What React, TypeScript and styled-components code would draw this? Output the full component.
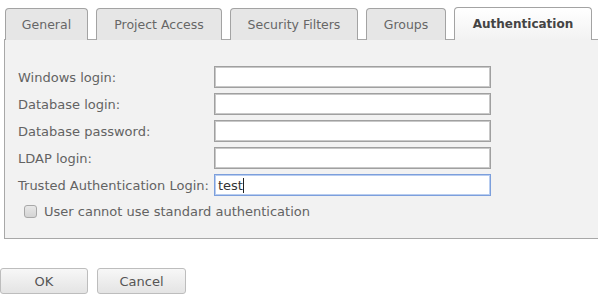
import React, { useState } from "react";
import styled, { createGlobalStyle, css } from "styled-components";

const GlobalStyle = createGlobalStyle`
  body {
    margin: 0;
    overflow: hidden;
    background: #ffffff;
    font-family: "DejaVu Sans", Verdana, sans-serif;
  }
`;

const Page = styled.div`
  width: 598px;
  height: 300px;
  overflow: hidden;
`;

const TabBar = styled.div`
  display: flex;
  gap: 8px;
  padding: 8px 0 0 5px;
  height: 31px;
  position: relative;
  z-index: 1;
`;

const Tab = styled.div<{ active?: boolean; w: number }>`
  width: ${(p) => p.w}px;
  box-sizing: border-box;
  height: 32px;
  border: 1px solid #a3a3a3;
  border-bottom: none;
  border-radius: 4px 4px 0 0;
  background: #e6e6e6;
  color: #666;
  font-size: 12.5px;
  display: flex;
  align-items: center;
  justify-content: center;
  padding-bottom: 1px;
  ${(p) =>
    p.active &&
    css`
      background: linear-gradient(#ffffff, #f2f2f2);
      color: #444;
      font-weight: bold;
      font-size: 12px;
      height: 33px;
      margin-top: -1px;
    `}
`;

const Panel = styled.div`
  width: 640px;
  box-sizing: border-box;
  margin-left: 4px;
  height: 200px;
  border: 1px solid #a8a8a8;
  background: #f2f2f2;
  padding: 26px 13px 0 13px;
`;

const Form = styled.div`
  display: grid;
  grid-template-columns: 196px 277px;
  row-gap: 5px;
  align-items: center;
`;

const Label = styled.label`
  font-size: 13px;
  color: #636363;
`;

const Input = styled.input`
  box-sizing: border-box;
  height: 22px;
  width: 277px;
  border: 1px solid #a0a0a0;
  box-shadow: inset 0 0 0 1px #c8c8c8;
  background: #fff;
  outline: none;
  padding: 1px 4px 0;
  font-family: "DejaVu Sans", Verdana, sans-serif;
  font-size: 13px;
  color: #333;
`;

const FocusedField = styled.div`
  box-sizing: border-box;
  height: 22px;
  width: 277px;
  border: 1px solid #7c9fdc;
  box-shadow: inset 0 0 0 1px #b8cdf0;
  background: #fff;
  padding: 1px 3px 0;
  font-size: 13px;
  color: #333;
  display: flex;
  align-items: center;
`;

const Caret = styled.span`
  display: inline-block;
  width: 1px;
  height: 15px;
  background: #222;
`;

const CheckRow = styled.label`
  display: flex;
  align-items: center;
  gap: 7px;
  margin: 8px 0 0 6px;
  font-size: 13px;
  color: #636363;
`;

const Box = styled.span`
  width: 13px;
  height: 13px;
  box-sizing: border-box;
  border: 1px solid #a8a8a8;
  border-radius: 3px;
  background: linear-gradient(#e8e8e8, #d4d4d4);
`;

const Buttons = styled.div`
  display: flex;
  gap: 9px;
  padding: 29px 0 0 0;
`;

const Button = styled.button<{ w: number }>`
  width: ${(p) => p.w}px;
  height: 26px;
  box-sizing: border-box;
  border: 1px solid #bdbdbd;
  border-radius: 3px;
  background: linear-gradient(#f7f7f7, #e4e4e4);
  color: #555;
  font-family: "DejaVu Sans", Verdana, sans-serif;
  font-size: 13px;
  padding: 0;
`;

const tabs = [
  { name: "General", w: 83 },
  { name: "Project Access", w: 126 },
  { name: "Security Filters", w: 128 },
  { name: "Groups", w: 80 },
  { name: "Authentication", w: 138 },
];

const fields = ["Windows login:", "Database login:", "Database password:", "LDAP login:"];

export default function App() {
  const [active] = useState("Authentication");
  return (
    <Page>
      <GlobalStyle />
      <TabBar>
        {tabs.map((t) => (
          <Tab key={t.name} w={t.w} active={t.name === active}>
            {t.name}
          </Tab>
        ))}
      </TabBar>
      <Panel>
        <Form>
          {fields.map((f) => (
            <React.Fragment key={f}>
              <Label>{f}</Label>
              <Input type="text" />
            </React.Fragment>
          ))}
          <Label>Trusted Authentication Login:</Label>
          <FocusedField>
            test
            <Caret />
          </FocusedField>
        </Form>
        <CheckRow>
          <Box />
          User cannot use standard authentication
        </CheckRow>
      </Panel>
      <Buttons>
        <Button w={88}>OK</Button>
        <Button w={89}>Cancel</Button>
      </Buttons>
    </Page>
  );
}
